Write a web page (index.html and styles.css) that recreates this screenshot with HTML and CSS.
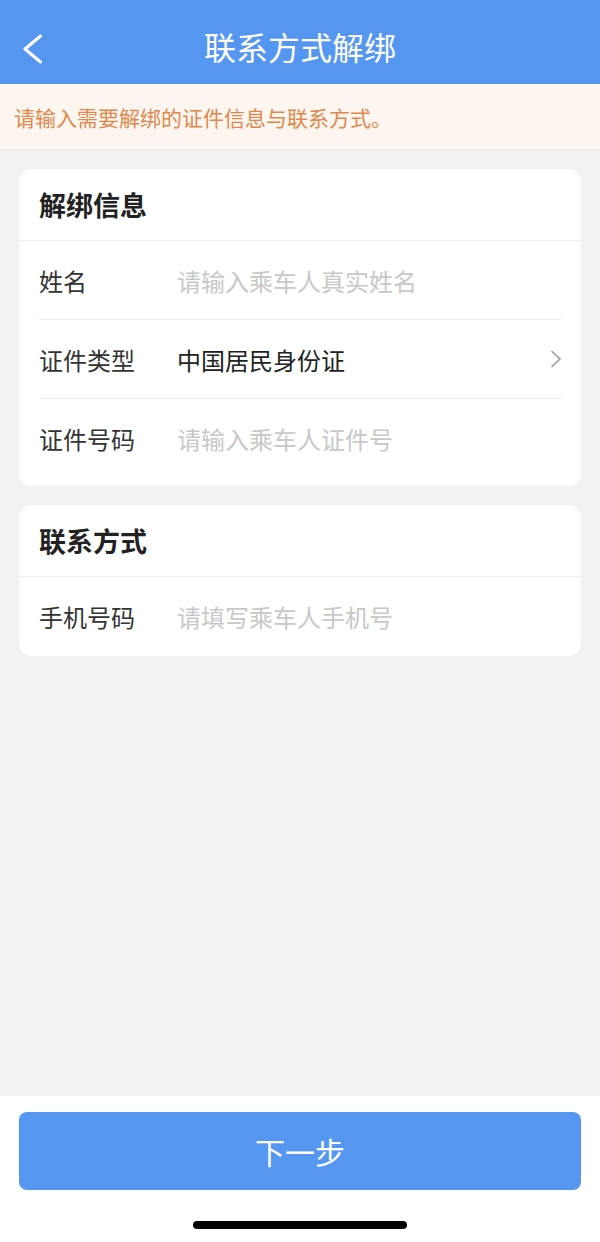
FILE: index.html
```html
<!DOCTYPE html>
<html lang="zh-CN">
<head>
    <meta charset="UTF-8">
    <meta name="viewport" content="width=device-width, initial-scale=1.0">
    <title>联系方式解绑</title>
    <link rel="stylesheet" href="styles.css">
</head>
<body>
    <!-- Barra superior -->
    <header class="topbar">
        <svg class="back" width="22" height="30" viewBox="0 0 22 30">
            <path d="M18.5 2 L3 15 L18.5 28" fill="none" stroke="#fff" stroke-width="3" stroke-linecap="round" stroke-linejoin="round"/>
        </svg>
        <h1 class="title">联系方式解绑</h1>
    </header>

    <div class="notice">请输入需要解绑的证件信息与联系方式。</div>

    <main class="content">
        <!-- Tarjeta de datos del documento -->
        <section class="card card-pad">
            <div class="card-head">解绑信息</div>
            <div class="row">
                <span class="label">姓名</span>
                <span class="placeholder">请输入乘车人真实姓名</span>
            </div>
            <div class="row">
                <span class="label">证件类型</span>
                <span class="value">中国居民身份证</span>
                <svg class="arrow" width="12" height="18" viewBox="0 0 12 18">
                    <path d="M2 1.5 L10 9 L2 16.5" fill="none" stroke="#9a9a9a" stroke-width="1.6" stroke-linecap="round" stroke-linejoin="round"/>
                </svg>
            </div>
            <div class="row">
                <span class="label">证件号码</span>
                <span class="placeholder">请输入乘车人证件号</span>
            </div>
        </section>

        <!-- Tarjeta de contacto -->
        <section class="card">
            <div class="card-head">联系方式</div>
            <div class="row">
                <span class="label">手机号码</span>
                <span class="placeholder">请填写乘车人手机号</span>
            </div>
        </section>
    </main>

    <footer class="bottom">
        <div class="next-btn">下一步</div>
        <div class="home-bar"></div>
    </footer>
</body>
</html>
```

FILE: styles.css
```css
* {
    box-sizing: border-box;
}

body {
    margin: 0;
    min-height: 100vh;
    display: flex;
    flex-direction: column;
    background-color: #f2f2f2;
    font-family: "Noto Sans CJK SC", "Noto Sans", sans-serif;
    color: #333;
}

/* Barra superior */
.topbar {
    height: 84px;
    background-color: #5596f1;
    display: flex;
    align-items: center;
    justify-content: center;
    position: relative;
}

.back {
    position: absolute;
    left: 22px;
    top: 34px;
}

.title {
    margin: 0;
    margin-top: 8px;
    font-size: 32px;
    font-weight: normal;
    color: #fff;
    line-height: 1;
}

/* Aviso */
.notice {
    height: 65px;
    padding-left: 14px;
    display: flex;
    align-items: center;
    background-color: #fdf6f0;
    color: #e0884c;
    font-size: 21px;
    box-shadow: 0 1px 2px rgba(0, 0, 0, 0.04);
}

.content {
    flex: 1;
    padding: 20px 19px;
    display: flex;
    flex-direction: column;
    gap: 19px;
}

/* Tarjetas */
.card {
    background-color: #fff;
    border-radius: 12px;
}

.card-pad {
    padding-bottom: 8px;
}

.card-head {
    height: 72px;
    padding-left: 20px;
    display: flex;
    align-items: center;
    font-size: 27px;
    font-weight: bold;
    color: #222;
    border-bottom: 1px solid #f0f0f0;
}

.row {
    height: 79px;
    margin: 0 19px 0 20px;
    display: flex;
    align-items: center;
    font-size: 24px;
    border-bottom: 1px solid #eeeeee;
}

.row:last-child {
    border-bottom: none;
}

.label {
    width: 138px;
    color: #333;
}

.value {
    flex: 1;
    color: #222;
}

.placeholder {
    flex: 1;
    color: #c8c8c8;
}

/* Parte inferior */
.bottom {
    height: 146px;
    background-color: #fff;
    padding: 16px 19px 0 19px;
    display: flex;
    flex-direction: column;
    align-items: center;
}

.next-btn {
    width: 100%;
    height: 78px;
    border-radius: 8px;
    background-color: #5596f1;
    color: #fff;
    font-size: 30px;
    display: flex;
    align-items: center;
    justify-content: center;
}

.home-bar {
    margin-top: 31px;
    width: 214px;
    height: 8px;
    border-radius: 4px;
    background-color: #000;
}
```
